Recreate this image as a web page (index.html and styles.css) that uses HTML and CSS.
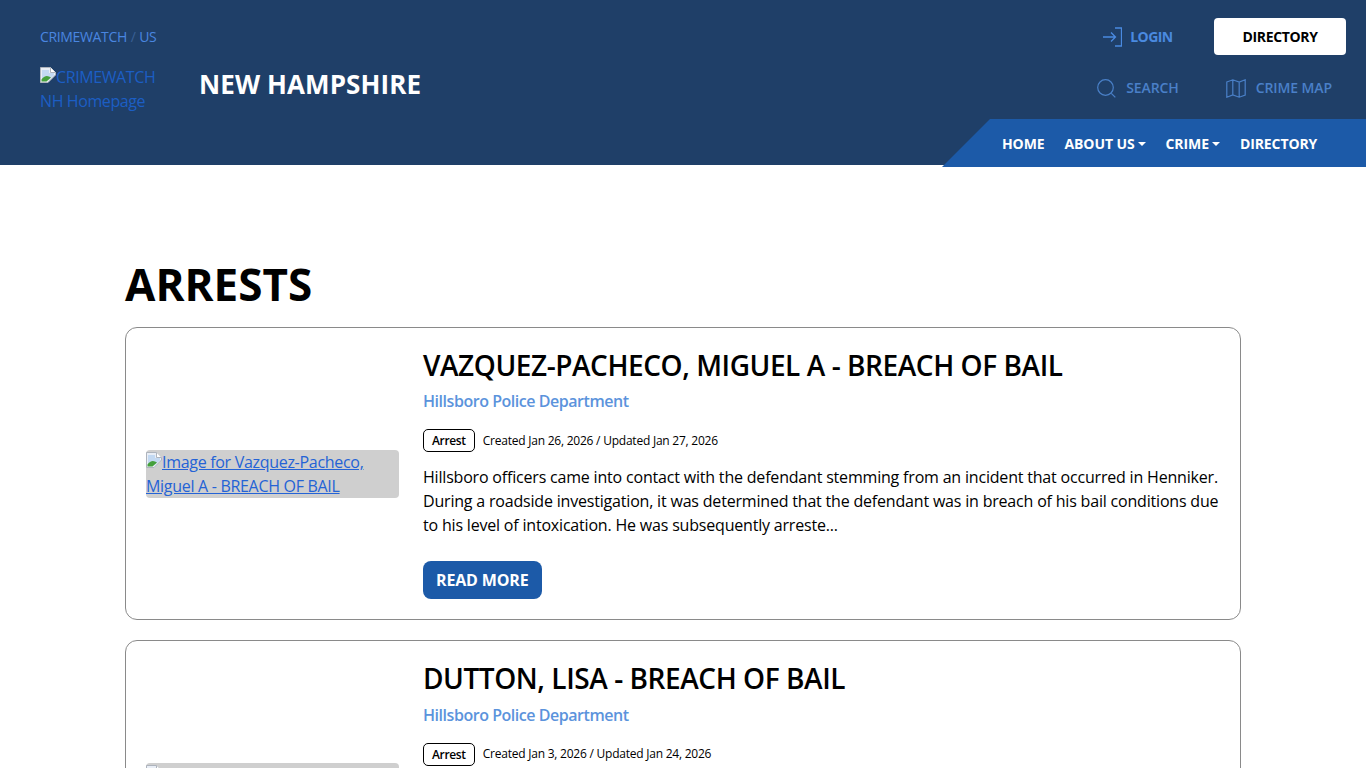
FILE: index.html
```html
<!DOCTYPE html>
<html lang="en">
<head>
<meta charset="utf-8">
<title>Arrests - CrimeWatch New Hampshire</title>
<link rel="stylesheet" href="styles.css">
</head>
<body>
<svg class="defs" width="0" height="0" aria-hidden="true">
  <symbol id="broken" viewBox="0 0 16 16">
    <path d="M0.5 0.5H10.5L15.5 5.5V8L8 15.500H0.5Z" fill="#e9eef6" stroke="#aeb4bd"/>
    <path d="M10.5 0.5V5.5H15.5" fill="#fff" stroke="#aeb4bd"/>
    <path d="M2 3H9V6H14V8.500L8.500 13L6 9L2 12Z" fill="#c3d9f2"/>
    <path d="M1.500 14.500V12.500C3.500 9.500 6.500 8 9 9.500L11 10.500L6.500 14.500Z" fill="#45a03c"/>
  </symbol>
</svg>
<header class="site-header">
  <div class="brand-col">
    <nav class="crumbs"><a href="#">CRIMEWATCH</a> <span class="slash">/</span> <a href="#">US</a></nav>
    <div class="brand-row">
      <a class="logo-alt" href="#"><svg class="broken"><use href="#broken"/></svg>CRIMEWATCH NH Homepage</a>
      <div class="state">NEW HAMPSHIRE</div>
    </div>
  </div>
  <div class="tools">
    <div class="tools-top">
      <a class="login" href="#">
        <svg width="20" height="20" viewBox="0 0 20 20" fill="none" stroke="currentColor" stroke-width="1.3"><path d="M1 10H13.500M9 5.500L13.500 10L9 14.500M13 1H19.500V19H13"/></svg>
        LOGIN</a>
      <a class="dir-btn" href="#">DIRECTORY</a>
    </div>
    <div class="tools-mid">
      <a class="tool" href="#">
        <svg width="19" height="19" viewBox="0 0 19 19" fill="none" stroke="currentColor" stroke-width="1.2"><circle cx="8.500" cy="8.500" r="7.800"/><path d="M14.300 14.300L18.300 18.300"/></svg>
        SEARCH</a>
      <a class="tool" href="#">
        <svg width="20" height="19" viewBox="0 0 20 19" fill="none" stroke="currentColor" stroke-width="1.200"><path d="M0.800 3L6.800 0.800L13.200 3L19.200 0.800V16L13.200 18.200L6.800 16L0.800 18.200ZM6.800 0.800V16M13.200 3V18.200"/></svg>
        CRIME MAP</a>
    </div>
  </div>
  <nav class="ribbon">
    <a href="#">HOME</a>
    <a class="caret" href="#">ABOUT US</a>
    <a class="caret" href="#">CRIME</a>
    <a href="#">DIRECTORY</a>
  </nav>
</header>
<main class="content">
  <h1>ARRESTS</h1>
  <article class="card">
    <div class="thumb"><a class="thumb-alt" href="#"><svg class="broken"><use href="#broken"/></svg>Image for Vazquez-Pacheco, Miguel A - BREACH OF BAIL</a></div>
    <div class="body">
      <h2>VAZQUEZ-PACHECO, MIGUEL A - BREACH OF BAIL</h2>
      <a class="dept" href="#">Hillsboro Police Department</a>
      <div class="meta"><span class="tag">Arrest</span><span class="dates">Created Jan 26, 2026 / Updated Jan 27, 2026</span></div>
      <p>Hillsboro officers came into contact with the defendant stemming from an incident that occurred in Henniker. During a roadside investigation, it was determined that the defendant was in breach of his bail conditions due to his level of intoxication. He was subsequently arreste...</p>
      <a class="more" href="#">READ MORE</a>
    </div>
  </article>
  <article class="card">
    <div class="thumb"><div class="thumb-alt"><svg class="broken"><use href="#broken"/></svg></div></div>
    <div class="body">
      <h2>DUTTON, LISA - BREACH OF BAIL</h2>
      <a class="dept" href="#">Hillsboro Police Department</a>
      <div class="meta"><span class="tag">Arrest</span><span class="dates">Created Jan 3, 2026 / Updated Jan 24, 2026</span></div>
    </div>
  </article>
</main>
</body>
</html>
```
FILE: styles.css
```css
* { box-sizing: border-box; }
html, body { margin: 0; height: 768px; overflow: hidden; background: #fff; }
body { font-family: "Open Sans", "Noto Sans", sans-serif; color: #000; font-size: 16px; line-height: 24px; letter-spacing: -0.19px; }
a { text-decoration: none; }
.defs { position: absolute; }
.broken { width: 16px; height: 16px; vertical-align: baseline; }

.site-header { position: relative; height: 165px; background: #1f3f68; display: flex; justify-content: space-between; padding: 18px 20px 0 40px; }
.brand-col { display: flex; flex-direction: column; }
.crumbs { font-size: 14px; line-height: 21px; margin-top: 8px; color: #2f6bc4; letter-spacing: -0.35px; word-spacing: 0.5px; }
.crumbs a { color: #4a86e0; }
.slash { color: #3a5f95; }
.brand-row { display: flex; align-items: flex-start; margin-top: 18px; }
.logo-alt { display: block; width: 116px; color: #1c5ec4; letter-spacing: -0.4px; }
.state { margin: 3px 0 0 43px; color: #fff; font-size: 26px; line-height: 32px; font-weight: 700; white-space: nowrap; letter-spacing: 0.1px; }

.tools { display: flex; flex-direction: column; align-items: flex-end; }
.tools-top { display: flex; align-items: center; height: 37px; }
.login { display: flex; align-items: center; gap: 8px; color: #4a8ae0; font-size: 14px; font-weight: 700; letter-spacing: -0.6px; margin-right: 41.5px; }
.dir-btn { display: flex; align-items: center; justify-content: center; width: 132px; height: 37px; background: #fff; border-radius: 4px; color: #000; font-size: 14px; font-weight: 700; letter-spacing: -0.35px; }
.tools-mid { display: flex; align-items: center; gap: 47px; margin-top: 21px; margin-right: 14px; }
.tool { display: flex; align-items: center; gap: 10px; color: #4a80c8; font-size: 14px; font-weight: 600; letter-spacing: -0.1px; }

.ribbon { position: absolute; left: 942px; right: 0; top: 119px; height: 48px; background: #1c5aa8; clip-path: polygon(48px 0, 100% 0, 100% 100%, 0 100%); display: flex; align-items: center; gap: 20px; padding: 2px 0 0 60px; }
.ribbon a { color: #fff; font-size: 14px; font-weight: 700; letter-spacing: -0.1px; }
.caret::after { content: ""; display: inline-block; margin-left: 3px; vertical-align: 3px; border-top: 4px solid #fff; border-left: 4px solid transparent; border-right: 4px solid transparent; }

.content { padding: 0 125px; }
h1 { margin: 92px 0 15px; font-size: 44px; line-height: 55px; font-weight: 700; letter-spacing: 0.05px; }
.card { display: flex; gap: 24px; border: 1px solid #8a8a8a; border-radius: 12px; padding: 20px; margin-bottom: 20px; min-height: 293px; }
.thumb { flex: 0 0 253px; align-self: center; }
.thumb-alt { display: block; min-height: 48px; background: #cfcfcf; border-radius: 4px; color: #2463d6; text-decoration: underline; letter-spacing: -0.3px; }
.body { flex: 1; min-width: 0; }
h2 { margin: 0; font-size: 28px; line-height: 34px; font-weight: 600; letter-spacing: -0.43px; }
.dept { display: block; margin-top: 7.3px; color: #5b93dc; font-weight: 600; letter-spacing: -0.46px; }
.meta { display: flex; align-items: center; gap: 8px; margin-top: 16px; }
.tag { display: inline-block; border: 1px solid #000; border-radius: 5px; padding: 0 8px; font-size: 12px; line-height: 21px; font-weight: 600; letter-spacing: -0.35px; }
.dates { font-size: 12px; line-height: 20px; letter-spacing: -0.23px; }
p { margin: 13px 0 24px; font-weight: 500; }
.more { display: inline-block; background: #1c5aa8; color: #fff; border-radius: 8px; padding: 7px 13px; font-weight: 700; letter-spacing: -0.15px; }
```
